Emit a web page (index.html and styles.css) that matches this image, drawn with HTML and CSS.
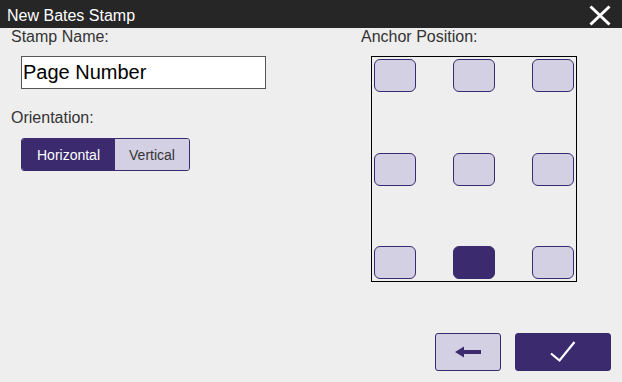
FILE: index.html
```html
<!DOCTYPE html>
<html lang="en">
<head>
    <meta charset="UTF-8">
    <meta name="viewport" content="width=device-width, initial-scale=1.0">
    <title>New Bates Stamp</title>
    <link rel="stylesheet" href="styles.css">
</head>
<body>
    <div class="dialog">
        <header class="titlebar">
            <span class="title">New Bates Stamp</span>
            <button class="close" aria-label="Close">
                <svg width="22" height="21" viewBox="0 0 22 21">
                    <path d="M1.5 1.5 L20.5 19.5 M20.5 1.5 L1.5 19.5" stroke="#fff" stroke-width="3" fill="none"/>
                </svg>
            </button>
        </header>
        <main class="content">
            <div class="col left">
                <label class="label" for="stampName">Stamp Name:</label>
                <input class="name-input" id="stampName" type="text" value="Page Number">
                <div class="label spaced">Orientation:</div>
                <div class="segmented">
                    <button class="seg active horizontal">Horizontal</button>
                    <button class="seg vertical">Vertical</button>
                </div>
            </div>
            <div class="col right">
                <div class="label">Anchor Position:</div>
                <div class="anchor-box">
                    <button class="cell"></button>
                    <button class="cell"></button>
                    <button class="cell"></button>
                    <button class="cell"></button>
                    <button class="cell"></button>
                    <button class="cell"></button>
                    <button class="cell"></button>
                    <button class="cell selected"></button>
                    <button class="cell"></button>
                </div>
            </div>
        </main>
        <footer class="actions">
            <button class="btn back" aria-label="Back">
                <svg width="26" height="12" viewBox="0 0 26 12">
                    <path d="M0 6 L9 0.5 L9 4 L26 4 L26 8 L9 8 L9 11.5 Z" fill="#3b2b6e"/>
                </svg>
            </button>
            <button class="btn ok" aria-label="OK">
                <svg width="26" height="22" viewBox="0 0 26 22">
                    <path d="M1 12.5 L9.5 19.5 L24.5 1" stroke="#fff" stroke-width="2.2" fill="none"/>
                </svg>
            </button>
        </footer>
    </div>
</body>
</html>
```

FILE: styles.css
```css
* {
    box-sizing: border-box;
}
body {
    margin: 0;
    font-family: "Liberation Sans", Arial, sans-serif;
    background-color: #eeeeee;
    color: #333333;
}
button {
    font-family: inherit;
    cursor: pointer;
}
.dialog {
    height: 100vh;
    display: flex;
    flex-direction: column;
}
.titlebar {
    height: 28px;
    background-color: #262626;
    color: white;
    display: flex;
    justify-content: space-between;
    align-items: flex-start;
    padding: 0 11px 0 7px;
}
.title {
    font-size: 16px;
    padding-top: 7px;
}
.close {
    background: none;
    border: none;
    padding: 0;
    margin-top: 5px;
    display: flex;
}
.content {
    flex: 1;
    display: flex;
}
.col {
    display: flex;
    flex-direction: column;
    align-items: flex-start;
}
.left {
    width: 361px;
    padding-left: 11px;
}
.label {
    font-size: 16px;
    line-height: 18px;
}
.label.spaced {
    margin-top: 20px;
}
.name-input {
    margin: 10px 0 0 10px;
    width: 245px;
    height: 33px;
    border: 1px solid #555555;
    background: white;
    font-family: inherit;
    font-size: 20px;
    color: black;
    padding: 0 1px;
    outline: none;
}
.segmented {
    margin: 11px 0 0 10px;
    display: flex;
    border: 1px solid #3b2b6e;
    border-radius: 3px;
    overflow: hidden;
}
.seg {
    height: 31px;
    border: none;
    font-size: 14px;
    padding: 0;
    background-color: #d4d0e4;
    color: #333333;
}
.seg.horizontal {
    width: 93px;
}
.seg.vertical {
    width: 74px;
}
.seg.active {
    background-color: #3b2b6e;
    color: white;
}
.anchor-box {
    margin: 10px 0 0 10px;
    width: 206px;
    height: 226px;
    border: 1px solid black;
    padding: 2px;
    display: grid;
    grid-template-columns: repeat(3, 42px);
    grid-template-rows: repeat(3, 33px);
    justify-content: space-between;
    align-content: space-between;
}
.cell {
    border: 1px solid #3b2b6e;
    border-radius: 6px;
    background-color: #d4d0e4;
    padding: 0;
}
.cell.selected {
    background-color: #3b2b6e;
}
.actions {
    display: flex;
    justify-content: flex-end;
    gap: 14px;
    padding: 0 11px 11px 0;
}
.btn {
    height: 38px;
    border-radius: 3px;
    border: 1px solid #3b2b6e;
    display: flex;
    align-items: center;
    justify-content: center;
    padding: 0;
}
.btn.back {
    width: 66px;
    background-color: #d4d0e4;
}
.btn.ok {
    width: 96px;
    background-color: #3b2b6e;
}
```
